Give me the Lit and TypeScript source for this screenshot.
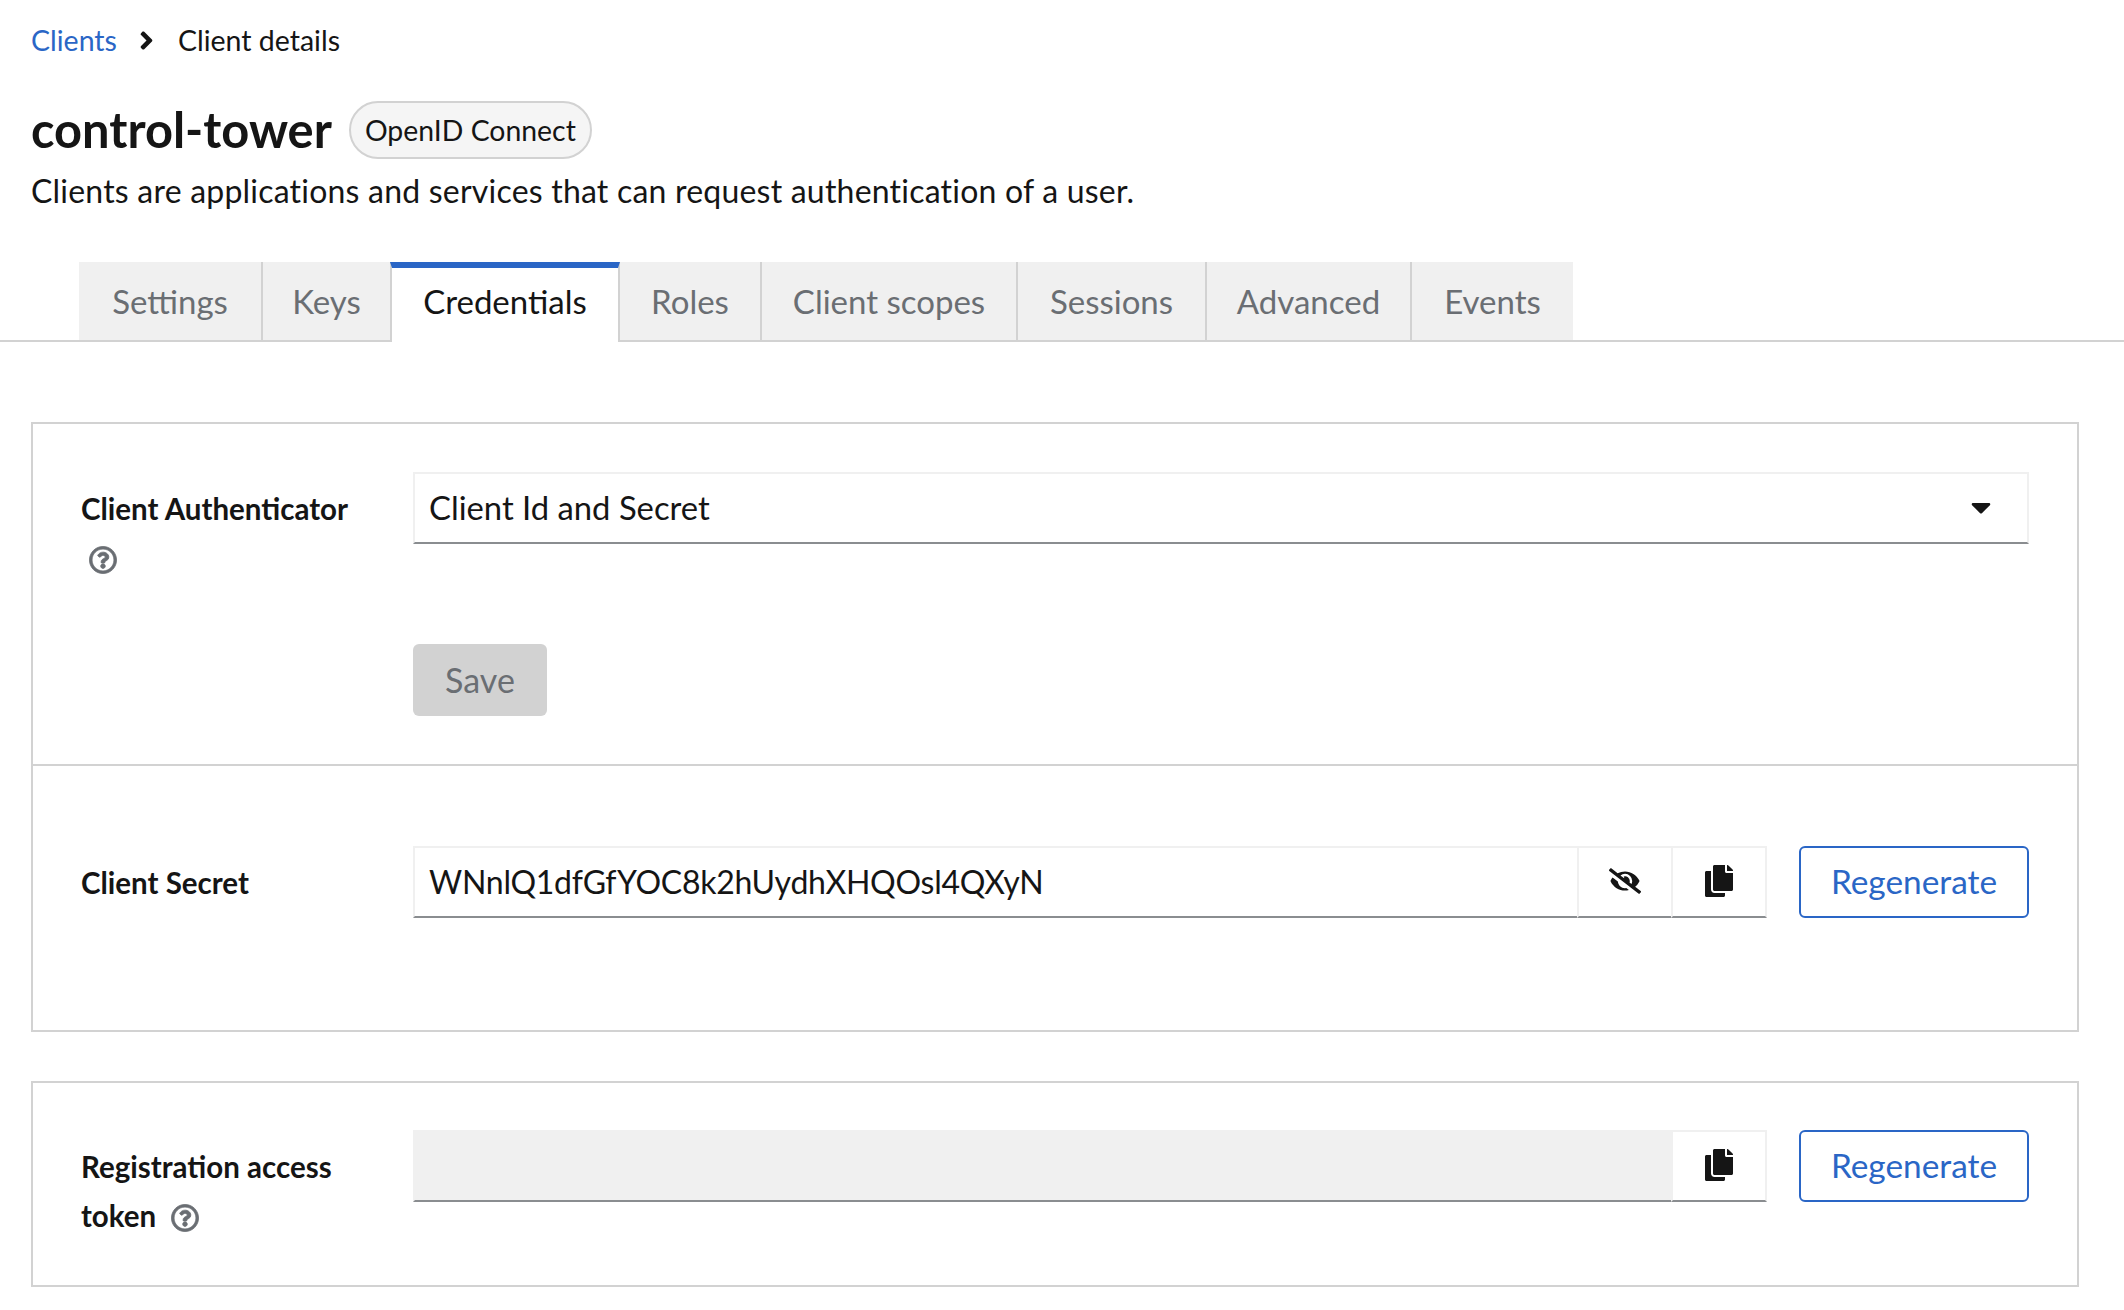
import { LitElement, html, css, svg } from "lit";
import { customElement } from "lit/decorators.js";

const copyPath = "M320 448v40c0 13.255-10.745 24-24 24H24c-13.255 0-24-10.745-24-24V120c0-13.255 10.745-24 24-24h72v296c0 30.879 25.121 56 56 56h168zm0-344V0H152c-13.255 0-24 10.745-24 24v368c0 13.255 10.745 24 24 24h272c13.255 0 24-10.745 24-24V128H344c-13.2 0-24-10.8-24-24zm120.971-31.029L375.029 7.029A24 24 0 0 0 358.059 0H352v96h96v-6.059a24 24 0 0 0-7.029-16.97z";
const eyePath = "M320 400c-75.85 0-137.25-58.71-142.9-133.11L72.2 185.82c-13.79 17.3-26.48 35.59-36.72 55.59a32.35 32.35 0 0 0 0 29.19C89.71 376.41 197.07 448 320 448c26.91 0 52.87-4 77.89-10.46L346 397.39a144.13 144.13 0 0 1-26 2.61zm313.82 58.1l-110.55-85.44a331.25 331.25 0 0 0 81.25-102.07 32.35 32.35 0 0 0 0-29.19C550.29 135.59 442.93 64 320 64a308.15 308.15 0 0 0-147.32 37.7L45.46 3.37A16 16 0 0 0 23 6.18L3.37 31.45A16 16 0 0 0 6.18 53.9l588.36 454.73a16 16 0 0 0 22.46-2.81l19.64-25.27a16 16 0 0 0-2.82-22.45zm-183.72-142l-39.3-30.38A94.75 94.75 0 0 0 416 256a94.76 94.76 0 0 0-121.31-92.21A47.65 47.65 0 0 1 304 192a46.64 46.64 0 0 1-1.54 10l-73.61-56.89A142.31 142.31 0 0 1 320 112a143.92 143.92 0 0 1 144 144c0 21.63-5.29 41.79-13.9 60.11z";
const helpPath = "M256 8C119.043 8 8 119.083 8 256c0 136.997 111.043 248 248 248s248-111.003 248-248C504 119.083 392.957 8 256 8zm0 448c-110.532 0-200-89.431-200-200 0-110.495 89.472-200 200-200 110.491 0 200 89.471 200 200 0 110.53-89.431 200-200 200zm107.244-255.2c0 67.052-72.421 68.084-72.421 92.863V300c0 6.627-5.373 12-12 12h-45.647c-6.627 0-12-5.373-12-12v-8.659c0-35.745 27.1-50.034 47.579-61.516 17.561-9.845 28.324-16.541 28.324-29.579 0-17.246-21.999-28.693-39.784-28.693-23.189 0-33.894 10.977-48.942 29.969-4.057 5.12-11.46 6.071-16.666 2.124l-27.824-21.098c-5.107-3.872-6.251-11.066-2.644-16.363C184.846 131.491 214.94 112 261.794 112c49.071 0 101.45 38.304 101.45 88.8zM298 368c0 23.159-18.841 42-42 42s-42-18.841-42-42 18.841-42 42-42 42 18.841 42 42z";
const chevPath = "M224.3 273l-136 136c-9.4 9.4-24.6 9.4-33.9 0l-22.6-22.6c-9.4-9.4-9.4-24.6 0-33.9l96.4-96.4-96.4-96.4c-9.4-9.4-9.4-24.6 0-33.9L54.3 103c9.4-9.4 24.6-9.4 33.9 0l136 136c9.5 9.4 9.5 24.6.1 34z";
const caretPath = "M31.3 192h257.3c17.8 0 26.7 21.5 14.1 34.1L174.1 354.8c-7.8 7.8-20.5 7.8-28.3 0L17.2 226.1C4.6 213.5 13.5 192 31.3 192z";

const icon = (vb: string, d: string, cls: string) =>
  html`<svg class=${cls} viewBox=${vb} fill="currentColor" aria-hidden="true">${svg`<path d=${d}></path>`}</svg>`;
const helpIcon = () => icon("0 0 512 512", helpPath, "help");
const copyIcon = () => icon("0 0 448 512", copyPath, "ico-copy");

const TABS = ["Settings", "Keys", "Credentials", "Roles", "Client scopes", "Sessions", "Advanced", "Events"];
const ACTIVE = "Credentials";

@customElement("app-root")
export class AppRoot extends LitElement {
  static styles = css`
    :host {
      display: block;
      width: 100%;
      height: 1310px;
      overflow: hidden;
      background: #fff;
      color: #151515;
      font-family: Lato, "Liberation Sans", sans-serif;
      font-size: 32px;
    }
    * { box-sizing: border-box; }
    .header { padding: 24px 31px 0; }
    .crumbs { display: flex; align-items: center; height: 32px; font-size: 28.5px; line-height: 32px; }
    .crumbs a { color: #2a66c6; text-decoration: none; }
    .chev { width: 15px; height: 29px; margin: 0 24px 0 22px; color: #151515; }
    .title-row { display: flex; align-items: center; margin-top: 45px; height: 58px; }
    h1 { margin: 0; font-size: 48.8px; font-weight: 700; line-height: 56px; height: 58px; }
    .chip {
      display: flex; align-items: center; justify-content: center;
      margin-left: 17px; width: 243px; height: 58px;
      border: 2px solid #d2d2d2; border-radius: 29px; background: #f5f5f5; font-size: 28.4px;
    }
    .desc { margin: 8px 0 0; font-size: 32px; letter-spacing: 0.21px; line-height: 48px; height: 48px; }
    .tabs {
      display: flex; margin-top: 47px; padding-left: 79px; height: 80px;
      border-bottom: 2px solid #d2d2d2;
    }
    .tab {
      display: flex; align-items: center; justify-content: center;
      height: 78px; background: #f0f0f0; color: #6a6e73; font-size: 33px;
      border-right: 2px solid #d2d2d2;
    }
    .tab:last-child { border-right: 0; }
    .tab.active {
      height: 80px; margin-bottom: -2px; padding-bottom: 8px; background: #fff; color: #151515;
      border-top: 6px solid #2a66c6; border-right: 2px solid #d2d2d2; border-left: 2px solid #d2d2d2;
      margin-left: -2px;
    }
    .main { padding: 80px 45px 0 31px; }
    .card { border: 2px solid #d2d2d2; }
    .card + .card { margin-top: 49px; }
    .section { display: grid; grid-template-columns: 332px 1fr; padding: 48px 48px 48px 48px; }
    .section.secret { border-top: 2px solid #d2d2d2; padding-top: 80px; padding-bottom: 112px; }
    .section.token { padding-top: 47px; padding-bottom: 45px; }
    .label { grid-row: span 2; padding-top: 12px; width: 280px; font-size: 29.5px; font-weight: 700; line-height: 49px; }
    .help { display: inline-block; vertical-align: -5px; width: 28px; height: 28px; margin-left: 8px; color: #6a6e73; }
    .help path { stroke: currentColor; stroke-width: 14px; }
    .field {
      display: flex; align-items: center; flex: 1; height: 72px; padding: 0 15px 2px;
      border: 2px solid #f0f0f0; border-bottom-color: #8a8d90; font-size: 32.8px; min-width: 0;
    }
    .field.value { font-size: 32px; letter-spacing: -0.25px; padding-left: 14px; }
    .field.select { justify-content: space-between; padding-right: 36px; padding-left: 14px; }
    .field.disabled { background: #f0f0f0; }
    .caret { width: 20px; height: 32px; color: #151515; }
    .controls { display: flex; }
    .group { display: flex; flex: 1; min-width: 0; }
    .addon {
      display: flex; align-items: center; justify-content: center;
      width: 96px; height: 72px; flex: none; margin-left: -2px; padding-bottom: 2px;
      border: 2px solid #f0f0f0; border-bottom-color: #8a8d90; background: #fff; color: #151515;
    }
    .ico-copy { width: 28px; height: 32px; }
    .ico-eye { width: 32px; height: 26px; }
    .regen {
      display: flex; align-items: center; justify-content: center;
      flex: none; width: 230px; height: 72px; margin-left: 32px; padding-bottom: 2px;
      border: 2px solid #2a66c6; border-radius: 6px; color: #2a66c6; font-size: 33.4px;
    }
    .save {
      display: flex; align-items: center; justify-content: center; grid-column: 2;
      width: 134px; height: 72px; margin-top: 100px; border-radius: 6px; padding-bottom: 2px;
      background: #d2d2d2; color: #6a6e73; font-size: 34px;
    }
  `;

  render() {
    const widths: Record<string, number> = {
      Settings: 184, Keys: 129, Credentials: 230, Roles: 142, "Client scopes": 256, Sessions: 189, Advanced: 205, Events: 161,
    };
    return html`
      <div class="header">
        <nav class="crumbs">
          <a href="#">Clients</a>
          ${icon("0 0 256 512", chevPath, "chev")}
          <span>Client details</span>
        </nav>
        <div class="title-row">
          <h1>control-tower</h1>
          <span class="chip">OpenID Connect</span>
        </div>
        <p class="desc">Clients are applications and services that can request authentication of a user.</p>
      </div>
      <div class="tabs">
        ${TABS.map(
          (t) => html`<div class="tab ${t === ACTIVE ? "active" : ""}" style="width:${widths[t]}px">${t}</div>`
        )}
      </div>
      <div class="main">
        <div class="card">
          <div class="section">
            <div class="label">Client Authenticator ${helpIcon()}</div>
            <div class="field select"><span>Client Id and Secret</span>${icon("0 0 320 512", caretPath, "caret")}</div>
            <div class="save">Save</div>
          </div>
          <div class="section secret">
            <div class="label">Client Secret</div>
            <div class="controls">
              <div class="group">
                <div class="field value">WNnlQ1dfGfYOC8k2hUydhXHQOsl4QXyN</div>
                <div class="addon">${icon("0 0 640 512", eyePath, "ico-eye")}</div>
                <div class="addon">${copyIcon()}</div>
              </div>
              <div class="regen">Regenerate</div>
            </div>
          </div>
        </div>
        <div class="card">
          <div class="section token">
            <div class="label">Registration access token ${helpIcon()}</div>
            <div class="controls">
              <div class="group">
                <div class="field disabled"></div>
                <div class="addon">${copyIcon()}</div>
              </div>
              <div class="regen">Regenerate</div>
            </div>
          </div>
        </div>
      </div>
    `;
  }
}
